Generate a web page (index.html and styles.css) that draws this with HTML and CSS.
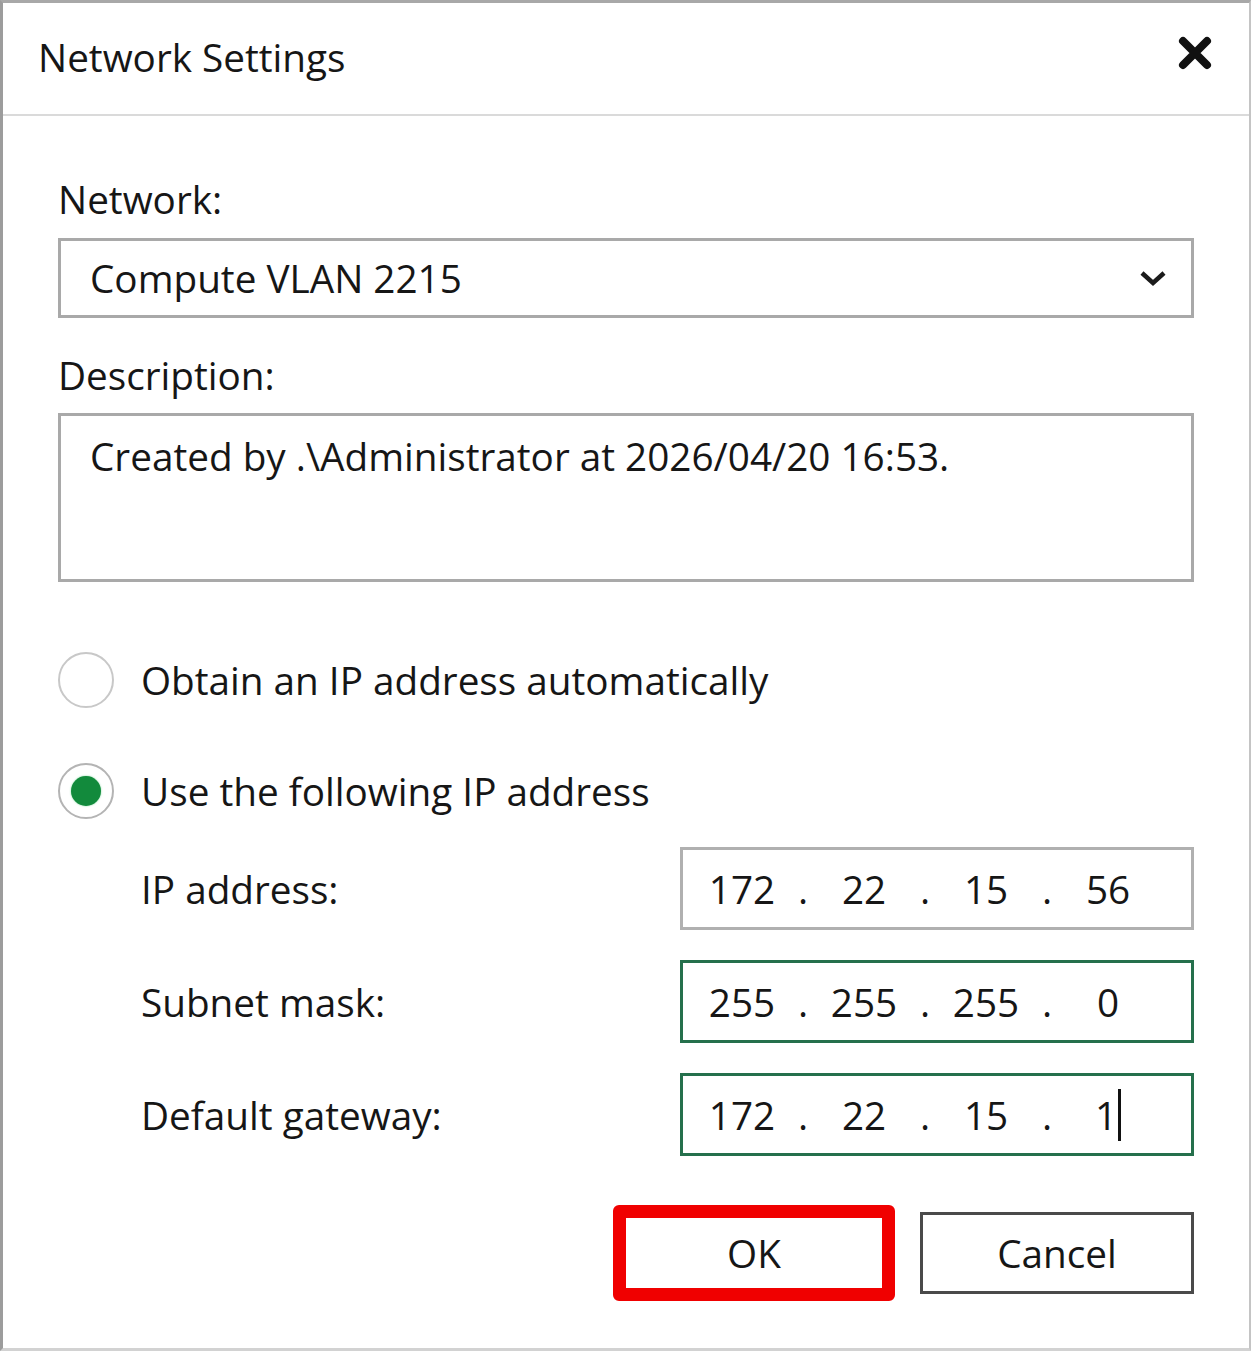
FILE: index.html
```html
<!DOCTYPE html>
<html lang="en">
<head>
  <meta charset="UTF-8">
  <title>Network Settings</title>
  <link rel="stylesheet" href="styles.css">
</head>
<body>
  <div class="dialog">
    <div class="dialog-head">
      <h1>Network Settings</h1>
      <button class="close" title="Close">
        <svg width="34" height="34" viewBox="0 0 34 34">
          <path d="M5 5 L29 29 M29 5 L5 29" stroke="#111" stroke-width="8" stroke-linecap="round" fill="none"/>
        </svg>
      </button>
    </div>

    <div class="dialog-body">
      <label class="field-label">Network:</label>
      <div class="select">
        <span>Compute VLAN 2215</span>
        <svg width="28" height="18" viewBox="0 0 28 18">
          <path d="M3 4 L14 14 L25 4" stroke="#1b1b1b" stroke-width="4.5" fill="none"/>
        </svg>
      </div>

      <label class="field-label gap-top">Description:</label>
      <div class="textarea">Created by .\Administrator at 2026/04/20 16:53.</div>

      <div class="radio-row first">
        <span class="radio"></span>
        <span>Obtain an IP address automatically</span>
      </div>
      <div class="radio-row">
        <span class="radio checked"></span>
        <span>Use the following IP address</span>
      </div>

      <div class="ip-grid">
        <span class="ip-label">IP address:</span>
        <div class="ip-box">
          <span class="octet">172</span><span class="dot">.</span>
          <span class="octet">22</span><span class="dot">.</span>
          <span class="octet">15</span><span class="dot">.</span>
          <span class="octet">56</span>
        </div>

        <span class="ip-label">Subnet mask:</span>
        <div class="ip-box active">
          <span class="octet">255</span><span class="dot">.</span>
          <span class="octet">255</span><span class="dot">.</span>
          <span class="octet">255</span><span class="dot">.</span>
          <span class="octet">0</span>
        </div>

        <span class="ip-label">Default gateway:</span>
        <div class="ip-box active">
          <span class="octet">172</span><span class="dot">.</span>
          <span class="octet">22</span><span class="dot">.</span>
          <span class="octet">15</span><span class="dot">.</span>
          <span class="octet"><span class="caret">1</span></span>
        </div>
      </div>

      <div class="actions">
        <button class="btn btn-ok">OK</button>
        <button class="btn">Cancel</button>
      </div>
    </div>
  </div>
</body>
</html>
```

FILE: styles.css
```css
body {
  margin: 0;
  background: #fff;
  color: #161616;
  font-family: "Open Sans", "Noto Sans", sans-serif;
  font-size: 38.7px;
}

.dialog {
  width: 1251px;
  height: 1351px;
  box-sizing: border-box;
  border-left: 3px solid #9c9c9c;
  border-top: 3px solid #a8a8a8;
  border-right: 2px solid #c4c4c4;
  border-bottom: 3px solid #d2d2d2;
  display: flex;
  flex-direction: column;
}

.dialog-head {
  height: 111px;
  border-bottom: 2px solid #dadada;
  display: flex;
  align-items: center;
  justify-content: space-between;
  padding: 0 37px 0 35px;
}
h1 {
  margin: 0 0 4px;
  font-size: 38.7px;
  font-weight: 400;
}
.close {
  border: none;
  background: none;
  padding: 0;
  margin-top: -12px;
  width: 34px;
  height: 34px;
}

.dialog-body {
  padding: 55px 55px 0 55px;
  display: flex;
  flex-direction: column;
}

.field-label {
  line-height: 56px;
}
.field-label.gap-top {
  margin-top: 29px;
}

.select {
  margin-top: 11px;
  height: 80px;
  box-sizing: border-box;
  border: 3px solid #a9a9a9;
  padding: 0 24px 0 29px;
  display: flex;
  align-items: center;
  justify-content: space-between;
}

.textarea {
  margin-top: 10px;
  height: 169px;
  box-sizing: border-box;
  border: 3px solid #a9a9a9;
  padding: 12px 29px;
  line-height: 56px;
}

.radio-row {
  height: 56px;
  margin-top: 55px;
  display: flex;
  align-items: center;
  gap: 27px;
}
.radio-row.first {
  margin-top: 70px;
}
.radio {
  width: 56px;
  height: 56px;
  box-sizing: border-box;
  border: 2px solid #c8c8c8;
  border-radius: 50%;
  display: flex;
  align-items: center;
  justify-content: center;
}
.radio.checked {
  border-color: #b4b4b4;
}
.radio.checked::after {
  content: "";
  width: 30px;
  height: 30px;
  border-radius: 50%;
  background: #128a3c;
  box-shadow: 0 0 2px #7fd79a;
}

.ip-grid {
  margin-top: 28px;
  padding-left: 83px;
  display: grid;
  grid-template-columns: 1fr 514px;
  grid-auto-rows: 83px;
  row-gap: 30px;
  align-items: center;
}
.ip-box {
  height: 83px;
  box-sizing: border-box;
  border: 3px solid #b0b0b0;
  padding-left: 10px;
  display: flex;
  align-items: center;
}
.ip-box.active {
  border-color: #25704c;
}
.octet {
  width: 98px;
  text-align: center;
}
.dot {
  width: 24px;
  text-align: center;
}
.caret {
  border-right: 3px solid #111;
  padding-right: 1px;
}

.actions {
  margin-top: 56px;
  display: flex;
  justify-content: flex-end;
  gap: 29px;
}
.btn {
  width: 274px;
  height: 82px;
  box-sizing: border-box;
  border: 3px solid #4a4a4a;
  background: #fff;
  color: #161616;
  font-family: inherit;
  font-size: 38.7px;
  position: relative;
}
.btn-ok::after {
  content: "";
  position: absolute;
  top: -10px;
  bottom: -10px;
  left: -7px;
  right: -7px;
  border: 13px solid #f00000;
  border-radius: 6px;
}
```
